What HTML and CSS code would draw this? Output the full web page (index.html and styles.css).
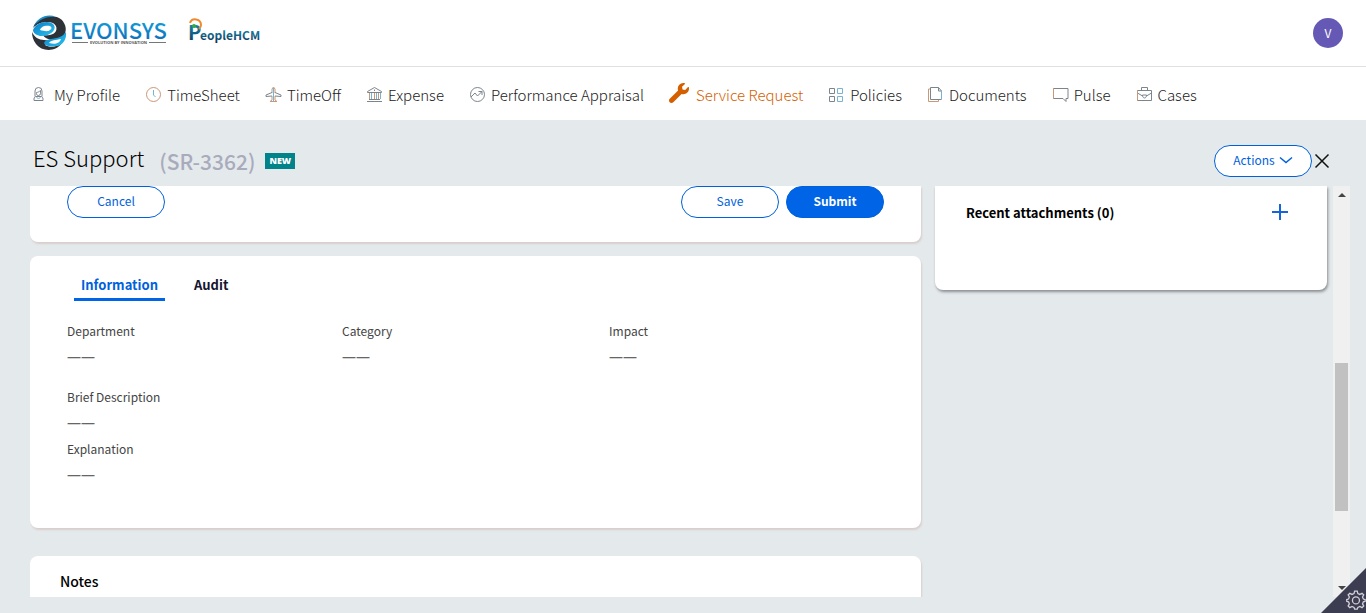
FILE: index.html
```html
<!DOCTYPE html>
<html lang="en">
<head>
<meta charset="utf-8">
<title>ES Support (SR-3362)</title>
<link rel="stylesheet" href="styles.css">
</head>
<body>
<header class="topbar">
  <div class="brands">
    <svg class="brand-evonsys" viewBox="0 0 140 40" role="img" aria-label="Evonsys">
      <defs>
        <linearGradient id="blue" x1="0" y1="0" x2="0" y2="1"><stop offset="0" stop-color="#12b2e4"/><stop offset="1" stop-color="#1062b4"/></linearGradient>
        <linearGradient id="sky" x1="0" y1="0" x2="1" y2="1"><stop offset="0" stop-color="#087bc4"/><stop offset="1" stop-color="#2cc4f0"/></linearGradient>
      </defs>
      <path d="M9 6C15 2 28 2 32 10c4 7 1 14-6 16-6 2-13 0-15-4 5 1 11 0 13-4 2-5-2-9-8-9-7 0-11 2-15 6 1-4 4-7 8-9z" fill="#2d3138"/>
      <path d="M0 19c2 5 7 8 12 8 5 1 10 0 14-1-5 2-11 3-13 6 5 3 12 2 17-2C24 39 10 39 4 31 1 27 0 23 0 19z" fill="#2d3138"/>
      <path d="M1 17c2-5 7-8 14-8 6 0 9 4 7 8-3 5-9 6-14 6-4-1-7-3-7-6z" fill="url(#sky)"/>
      <path d="M8 17c1-4 6-5 10-4 2 1 2 3 0 4-2 2-6 1-10 0z" fill="#fff"/>
      <path d="M2 13C5 5 15 0 24 4 16 3 8 6 2 13z" fill="#168cc9"/>
      <path d="M34 19c1 8-4 14-10 14-6 1-11 0-12-3 1-4 8-4 13-5 4-1 7-3 9-6z" fill="url(#sky)"/>
      <path d="M17 30c2-3 7-3 12-4-1 4-6 6-12 4z" fill="#fff"/>
      <text x="38" y="26" class="evonsys-name" fill="url(#blue)">EVONSYS</text>
      <path d="M40 29.500h16M117 29.500h17" stroke="#777" stroke-width="1"/>
      <text x="58" y="31" class="evonsys-tagline">EVOLUTION BY INNOVATION</text>
    </svg>
    <svg class="brand-people" viewBox="0 0 80 34" role="img" aria-label="PeopleHCM">
      <defs><linearGradient id="deep" x1="0" y1="0" x2="0" y2="1"><stop offset="0" stop-color="#16a0c4"/><stop offset="1" stop-color="#102e50"/></linearGradient></defs>
      <text x="0" y="24" class="people-initial" fill="url(#deep)">P</text>
      <text x="12" y="24" class="people-name" fill="url(#deep)">eopleHCM</text>
      <path d="M2 7c2-6 11-4 11 2 0 2-1 3-2 4" fill="none" stroke="#f08a2c" stroke-width="2"/>
      <circle cx="6" cy="10" r="2" fill="#35a848"/>
    </svg>
  </div>
  <button class="avatar" type="button" aria-label="Account">V</button>
</header>

<nav class="nav" aria-label="Main">
  <a class="nav-item" href="#"><svg class="icon" viewBox="0 0 17 17"><path d="M2 14.500V13c0-1.500 1-2.500 2-2.500h5c1 0 2 1 2 2.500v1.500zM3 10.500V5a3.500 3.500 0 0 1 7 0v5.500M4.500 6.500c1 0 3-1 4-2 0 2 .5 5-2 5s-2-2-2-3z"/><path class="cool" d="M4.500 11l2 2 2-2"/></svg>My Profile</a>
  <a class="nav-item" href="#"><svg class="icon" viewBox="0 0 17 17"><circle class="warm" cx="8.500" cy="8.500" r="7"/><path class="cool" d="M8.500 4v5l2 2"/></svg>TimeSheet</a>
  <a class="nav-item" href="#"><svg class="icon" viewBox="0 0 17 17"><path class="warm" d="M7 7V3l1.500-2L10 3v4M7 10v4l-2 1.500h7L10 14v-4"/><path d="M7 6.500L1 9v1.500l6-.5M10 6.500L16 9v1.500l-6-.5"/><path class="cool" d="M8.500 2v13"/></svg>TimeOff</a>
  <a class="nav-item" href="#"><svg class="icon" viewBox="0 0 17 17"><path d="M1.500 6.500v-1l7-4 7 4v1zM3 13.500h11M1 15.500h15M8.500 3.500v1.500"/><path class="warm" d="M3.500 7v6M8.500 7v6M12.500 7v6"/><path class="cool" d="M5.500 7v6M10.500 7v6M14.500 7v6"/></svg>Expense</a>
  <a class="nav-item" href="#"><svg class="icon" viewBox="0 0 17 17"><circle cx="8.500" cy="8.500" r="7"/><path d="M2 11l4-4 2.500 3L13 5.500M9.500 5.500H13V9"/></svg>Performance Appraisal</a>
  <a class="nav-item current" href="#" aria-current="page"><svg class="icon-wrench" viewBox="0 0 512 512"><path d="M507.700 109.100c-2.200-9-13.500-12.100-20.100-5.600l-74.300 74.300-67.900-11.300-11.300-67.900 74.300-74.300c6.600-6.600 3.400-17.900-5.700-20.200-47.400-11.700-99.600.9-136.600 37.900-39.600 39.600-50.500 97.100-34.100 147.200L18.700 402.800c-25 25-25 65.500 0 90.500s65.500 25 90.500 0l213.200-213.200c50.100 16.700 107.500 5.700 147.400-34.200 37.100-37.100 49.700-89.300 37.900-136.800z"/></svg>Service Request</a>
  <a class="nav-item" href="#"><svg class="icon" viewBox="0 0 17 17"><path d="M1.500 2.500h5v5h-5zM1.500 10.500h5v5h-5z"/><path class="cool" d="M9.500 2.500h5v5h-5zM9.500 10.500h5v5h-5z"/></svg>Policies</a>
  <a class="nav-item" href="#"><svg class="icon" viewBox="0 0 17 17"><path class="warm" d="M3 3H1.500v12.500h10V14"/><path d="M14.500 13.500h-11v-12h8l3 3.500h-3V1.500"/><path class="cool" d="M14.500 5v8.500"/></svg>Documents</a>
  <a class="nav-item" href="#"><svg class="icon" viewBox="0 0 17 17"><path d="M1 2.500h15v10h-2v3l-3-3H1"/><path class="warm" d="M1.500 2v11"/></svg>Pulse</a>
  <a class="nav-item" href="#"><svg class="icon" viewBox="0 0 17 17"><path d="M1.500 4.500h14v10h-14zM5.500 4V1.500h6V4M1.500 7l5 3M15.500 7l-5 3M6.500 9h4c0 4-4 4-4 0z"/><path class="warm" d="M1.500 4v11"/></svg>Cases</a>
</nav>

<main class="workspace">
  <div class="case-head">
    <h1 class="case-title">ES Support</h1>
    <span class="case-id">(SR-3362)</span>
    <span class="status">NEW</span>
    <button class="pill actions" type="button">Actions <svg class="chevron" viewBox="0 0 14 8"><path d="M1 1.500l6 5 6-5"/></svg></button>
    <button class="close" type="button" aria-label="Close"><svg viewBox="0 0 16 16"><path d="M1.500 1.500l13 13M14.500 1.500l-13 13"/></svg></button>
  </div>

  <div class="viewport">
    <div class="content">
      <div class="column">
        <section class="card form-card">
          <button class="pill" type="button">Cancel</button>
          <button class="pill push" type="button">Save</button>
          <button class="pill primary" type="button">Submit</button>
        </section>
        <section class="card info-card">
          <div class="tabs" role="tablist">
            <button class="tab selected" type="button" role="tab" aria-selected="true">Information</button>
            <button class="tab" type="button" role="tab" aria-selected="false">Audit</button>
          </div>
          <dl class="fields">
            <div class="field"><dt>Department</dt><dd>——</dd></div>
            <div class="field"><dt>Category</dt><dd>——</dd></div>
            <div class="field"><dt>Impact</dt><dd>——</dd></div>
          </dl>
          <dl class="fields stacked">
            <div class="field"><dt>Brief Description</dt><dd>——</dd></div>
            <div class="field"><dt>Explanation</dt><dd>——</dd></div>
          </dl>
        </section>
        <section class="card notes-card"><h2 class="card-title">Notes</h2></section>
      </div>
      <aside class="card attachments">
        <h2 class="card-title small">Recent attachments (0)</h2>
        <button class="add" type="button" aria-label="Add attachment"><svg viewBox="0 0 18 18"><path d="M9 1v16M1 9h16"/></svg></button>
      </aside>
    </div>
    <div class="scrollbar" aria-hidden="true">
      <span class="arrow up"></span>
      <span class="track"><span class="thumb"></span></span>
      <span class="arrow down"></span>
    </div>
  </div>
</main>

<button class="settings" type="button" aria-label="Settings">
  <svg viewBox="0 0 24 24"><path d="M12 2.500l2 0 .7 2.700 2.300 1 2.500-1.400 1.900 1.900L20 9.200l1 2.300 2 .5v2l-2 .7-1 2.300 1.400 2.400-1.900 1.900-2.500-1.300-2.300 1-.7 2h-3l-.7-2-2.300-1-2.500 1.300-1.900-1.900L5 17l-1-2.300-2-.7v-2l2-.5 1-2.300-1.400-2.500 1.900-1.900L8 6.200l2.300-1 .7-2.700z"/><circle cx="12.500" cy="13" r="4"/></svg>
</button>
</body>
</html>
```
FILE: styles.css
```css
* { box-sizing: border-box; }

body {
  margin: 0;
  height: 100vh;
  display: flex;
  flex-direction: column;
  overflow: hidden;
  position: relative;
  background: #fff;
  color: #000;
  font-family: "Noto Sans CJK SC", "Open Sans", sans-serif;
  font-size: 12px;
  line-height: 16px;
}

button { font: inherit; cursor: pointer; }
h1, h2, dl, dd { margin: 0; }

/* Top bar */
.topbar {
  flex: none;
  display: flex;
  align-items: center;
  justify-content: space-between;
  height: 67px;
  padding: 0 23px 0 32px;
  border-bottom: 1px solid #e0e0e0;
}
.brands { display: flex; align-items: center; gap: 16px; }
.brand-evonsys { width: 140px; height: 40px; }
.brand-people { width: 80px; height: 34px; }
.evonsys-name { font: 500 22px "Noto Sans CJK SC", sans-serif; }
.evonsys-tagline { font: 700 4px "Open Sans", sans-serif; fill: #555; }
.people-initial { font: 700 20px "Noto Sans CJK SC", sans-serif; }
.people-name { font: 700 12px "Noto Sans CJK SC", sans-serif; }
.avatar {
  width: 30px;
  height: 30px;
  padding: 0;
  border: 0;
  border-radius: 50%;
  background: #6559b5;
  color: #fff;
}

/* Navigation */
.nav {
  flex: none;
  display: flex;
  align-items: center;
  gap: 25px;
  height: 53px;
  padding: 2px 32px 0;
}
.nav-item {
  display: flex;
  align-items: center;
  gap: 5px;
  color: #222;
  font-size: 15px;
  font-weight: 300;
  line-height: 24px;
  text-decoration: none;
  white-space: nowrap;
}
.icon { width: 17px; height: 17px; fill: none; stroke: #7d858c; stroke-width: 1; }
.icon .warm { stroke: #c89878; }
.icon .cool { stroke: #78b4d2; }
.icon-wrench { width: 20px; height: 20px; margin-bottom: 4px; fill: #d35f00; }
.nav-item.current { color: #d35f00; gap: 7px; }

/* Case header */
.workspace {
  flex: 1;
  min-height: 0;
  display: flex;
  flex-direction: column;
  padding: 0 16px 16px 30px;
  background: #e4e9ec;
}
.case-head {
  flex: none;
  display: flex;
  align-items: center;
  height: 66px;
  padding: 16px 20px 0 3px;
}
.case-title { margin-bottom: 8px; font-size: 22px; font-weight: 300; line-height: 32px; }
.case-id { margin-left: 15px; color: #a9abbd; font-size: 21px; font-weight: 500; line-height: 32px; }
.status {
  margin-left: 10px;
  padding: 0 4px;
  background: #008489;
  color: #fff;
  font: 800 9px/16px "Open Sans", sans-serif;
}
.pill {
  width: 98px;
  height: 32px;
  padding: 0 0 2px;
  border: 1px solid #0061dc;
  border-radius: 16px;
  background: #fff;
  color: #0061dc;
}
.primary { background: #0064e6; color: #fff; font-weight: 700; }
.actions {
  display: flex;
  align-items: center;
  justify-content: center;
  gap: 4px;
  margin: 0 2px 0 auto;
}
.chevron { width: 14px; height: 8px; fill: none; stroke: #0061dc; stroke-width: 1.500; }
.close { padding: 0; border: 0; background: none; }
.close svg { display: block; width: 16px; height: 16px; stroke: #111; stroke-width: 1.500; }

/* Scrolling area */
.viewport { flex: 1; min-height: 0; display: flex; gap: 6px; overflow: hidden; }
.content {
  flex: 1;
  min-width: 0;
  display: grid;
  grid-template-columns: 891fr 392fr;
  gap: 14px;
  align-items: start;
}
.card { border-radius: 8px; background: #fff; box-shadow: 1px 2px 2px #d8cfcc; }
.form-card {
  display: flex;
  gap: 7px;
  padding: 0 37px 24px;
  border-radius: 0 0 8px 8px;
}
.push { margin-left: auto; }
.info-card { margin-top: 14px; padding: 18px 37px 45px; }
.tabs { display: flex; gap: 22px; padding-left: 7px; }
.tab {
  padding: 0 7px 2px;
  border: 0;
  border-bottom: 3px solid transparent;
  background: none;
  color: #151530;
  font-size: 13px;
  font-weight: 700;
  line-height: 22px;
}
.tab.selected { border-color: #0064e6; color: #0061dc; }
.fields { display: grid; grid-template-columns: 275fr 267fr 275fr; margin-top: 22px; }
.fields.stacked { grid-template-columns: 1fr; gap: 10px; margin-top: 24px; }
.field { color: #444; line-height: 16px; }
.field dd { margin-top: 10px; color: #666; font-family: "Open Sans", sans-serif; font-size: 14px; }
.notes-card { margin-top: 28px; padding: 15px 30px 40px; border-radius: 8px 8px 0 0; }
.card-title { font-size: 14px; font-weight: 500; line-height: 20px; }
.card-title.small { font-size: 13px; font-weight: 700; }
.attachments {
  display: flex;
  align-items: flex-start;
  justify-content: space-between;
  padding: 17px 38px 67px 31px;
  border-radius: 0 0 8px 8px;
  box-shadow: 1px 2px 3px #8a8f92;
}
.add { padding: 0; border: 0; background: none; }
.add svg { display: block; width: 18px; height: 18px; stroke: #1465dc; stroke-width: 2; }

.scrollbar {
  flex: none;
  display: flex;
  flex-direction: column;
  align-items: center;
  width: 17px;
  padding: 7px 2px;
  background: #f0f0f0;
}
.arrow { border: 4px solid transparent; }
.arrow.up { border-top: 0; border-bottom-color: #444; }
.arrow.down { border-bottom: 0; border-top-color: #444; }
.track { flex: 1; width: 13px; display: flex; flex-direction: column; }
.track::before { content: ""; flex: 166; }
.track::after { content: ""; flex: 75; }
.thumb { flex: 148; background: #c1c1c1; }

/* Corner settings button */
.settings {
  position: absolute;
  right: 0;
  bottom: 0;
  width: 45px;
  height: 45px;
  padding: 0;
  border: 0;
  background: #3d3d52;
  clip-path: polygon(100% 0, 100% 100%, 0 100%);
}
.settings svg {
  position: absolute;
  right: 0;
  bottom: 3px;
  width: 21px;
  height: 21px;
  fill: none;
  stroke: #d0d0d8;
  stroke-width: 1.500;
}
```
